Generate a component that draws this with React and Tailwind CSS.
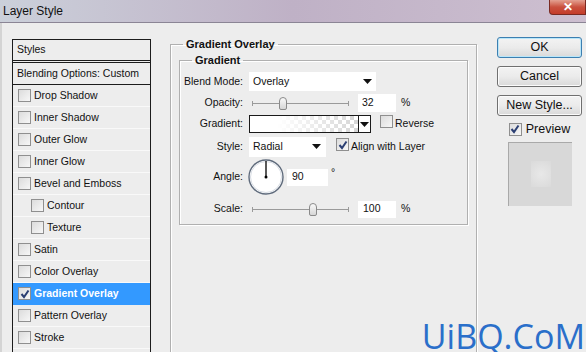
import React from "react";

const font = { fontFamily: '"Liberation Sans", Arial, sans-serif' };

function Check({ checked }) {
  return (
    <span className="inline-flex h-[13px] w-[13px] shrink-0 items-center justify-center border border-[#8f8f8f] bg-gradient-to-br from-[#dcdcdc] to-[#f7f7f7]">
      {checked && (
        <svg width="10" height="10" viewBox="0 0 10 10">
          <path d="M1.5 5 L4 8 L8.5 1.5" fill="none" stroke="#2b3f73" strokeWidth="2" />
        </svg>
      )}
    </span>
  );
}

function Arrow() {
  return (
    <svg width="9" height="5" viewBox="0 0 9 5">
      <path d="M0 0 H9 L4.5 5 Z" fill="#111" />
    </svg>
  );
}

function Slider({ pos }) {
  return (
    <div className="relative h-[18px] w-[100px]">
      <div className="absolute left-[3px] right-0 top-[9px] h-px bg-[#9a9a9a]" />
      <div className="absolute left-[3px] top-[7px] h-[5px] w-px bg-[#9a9a9a]" />
      <div className="absolute right-0 top-[7px] h-[5px] w-px bg-[#9a9a9a]" />
      <div
        className="absolute top-[3px] h-[13px] w-[8px] rounded-t-[4px] rounded-b-[2px] border border-[#8a8a8a] bg-gradient-to-b from-[#fafafa] to-[#d6d6d6]"
        style={{ left: pos }}
      />
    </div>
  );
}

const rows = [
  ["Drop Shadow", 0],
  ["Inner Shadow", 0],
  ["Outer Glow", 0],
  ["Inner Glow", 0],
  ["Bevel and Emboss", 0],
  ["Contour", 1],
  ["Texture", 1],
  ["Satin", 0],
  ["Color Overlay", 0],
  ["Gradient Overlay", 0, true],
  ["Pattern Overlay", 0],
  ["Stroke", 0],
];

function Button({ children, primary }) {
  return (
    <div
      className={
        "flex h-[21px] w-[85px] items-center justify-center rounded-[3px] border bg-gradient-to-b from-[#f3f3f3] via-[#ebebeb] to-[#d9d9d9] text-[12.5px] text-[#111] " +
        (primary ? "border-[#3c7fb1] shadow-[inset_0_0_0_1px_#b9e6f9]" : "border-[#707070] shadow-[inset_0_0_0_1px_#fbfbfb]")
      }
    >
      {children}
    </div>
  );
}

export default function App() {
  return (
    <div className="relative h-[352px] w-[586px] overflow-hidden bg-[#ededed] text-[#111]" style={font}>
      <div className="relative flex h-[23px] items-center border-b border-[#8b8595] bg-gradient-to-r from-[#cbd0da] via-[#bfb1c6] to-[#cdbfd0] pl-[3px] text-[12px] text-[#111]">
        Layer Style
        <div className="absolute right-0 top-0 flex h-[15px] w-[37px] items-center justify-center rounded-bl-[4px] border border-t-0 border-[#7a2a22] bg-gradient-to-b from-[#e3a091] via-[#c9503e] to-[#c43c2a] text-[12px] font-bold leading-none text-white">
          ✕
        </div>
      </div>

      <div className="flex border-l-[2px] border-[#d4d4d4] pl-[10px] pt-[15px]">
        <div className="mt-[1px] w-[139px] shrink-0 border border-[#1c1c1c] text-[10.5px]">
          <div className="flex h-[23px] items-center border-b-[3px] border-double border-[#1c1c1c] pl-[4px]">Styles</div>
          <div className="flex h-[22px] items-center border-b border-[#1c1c1c] pl-[4px]">Blending Options: Custom</div>
          {rows.map(([label, indent, sel]) => (
            <div
              key={label}
              className={
                "flex h-[22px] items-center gap-[3px] border-b " +
                (sel ? "border-[#3399ff] bg-[#3399ff] font-bold text-white" : "border-[#f9f9f9]") +
                (indent ? " pl-[18px]" : " pl-[5px]")
              }
            >
              <Check checked={sel} />
              <span>{label}</span>
            </div>
          ))}
        </div>

        <div className="ml-[19px] shrink-0">
          <fieldset className="h-[330px] w-[307px] border border-[#b0b0b0] px-[8px] shadow-[inset_1px_1px_0_#fff,1px_1px_0_#fff]">
            <legend className="ml-[4px] px-[3px] text-[11px] font-bold leading-[13px]">Gradient Overlay</legend>
            <fieldset className="mt-[3px] h-[171px] border border-[#b0b0b0] shadow-[inset_1px_1px_0_#fff,1px_1px_0_#fff]">
              <legend className="ml-[12px] px-[3px] text-[11px] font-bold leading-[13px]">Gradient</legend>
              <div className="grid grid-cols-[63px_1fr] gap-x-[6px] pt-[4px] text-[10.5px]">
                <div className="flex h-[21px] items-center justify-end">Blend Mode:</div>
                <div className="flex h-[21px] items-center">
                  <div className="flex h-[19px] w-[127px] items-center justify-between bg-white pl-[4px] pr-[4px]">
                    <span>Overlay</span>
                    <Arrow />
                  </div>
                </div>

                <div className="flex h-[21px] items-center justify-end">Opacity:</div>
                <div className="flex h-[21px] items-center">
                  <Slider pos={30} />
                  <div className="ml-[9px] flex h-[18px] w-[38px] items-center bg-white pl-[4px]">32</div>
                  <span className="ml-[5px]">%</span>
                </div>

                <div className="flex h-[22px] items-center justify-end">Gradient:</div>
                <div className="flex h-[22px] items-center">
                  <div className="flex h-[18px] w-[122px] border border-[#1a1a1a]">
                    <div className="h-full w-[108px] bg-[linear-gradient(to_right,#fff_25%,rgba(255,255,255,0)),repeating-conic-gradient(#d6d6d6_0_25%,#fff_0_50%)] bg-[length:100%_100%,8px_8px]" />
                    <div className="flex h-full flex-1 items-center justify-center border-l border-[#1a1a1a] bg-white">
                      <Arrow />
                    </div>
                  </div>
                  <span className="ml-[9px]">
                    <Check />
                  </span>
                  <span className="ml-[2px]">Reverse</span>
                </div>

                <div className="flex h-[23px] items-center justify-end">Style:</div>
                <div className="flex h-[23px] items-center">
                  <div className="flex h-[20px] w-[77px] items-center justify-between bg-white pl-[4px] pr-[5px]">
                    <span>Radial</span>
                    <Arrow />
                  </div>
                  <span className="ml-[10px]">
                    <Check checked />
                  </span>
                  <span className="ml-[2px]">Align with Layer</span>
                </div>

                <div className="flex h-[38px] items-center justify-end">Angle:</div>
                <div className="flex h-[38px] items-center">
                  <svg width="38" height="38" viewBox="0 0 38 38" className="-ml-[2px]">
                    <circle cx="19" cy="19" r="17" fill="#fff" stroke="#5f6b7c" strokeWidth="1.4" />
                    <circle cx="19" cy="19" r="15.5" fill="none" stroke="#d8dde4" strokeWidth="1" />
                    <line x1="19" y1="19" x2="19" y2="3" stroke="#000" strokeWidth="1.3" />
                    <circle cx="19" cy="19" r="1.5" fill="#000" />
                  </svg>
                  <div className="ml-[2px] flex h-[17px] w-[41px] items-center bg-white pl-[5px]">90</div>
                  <span className="-mt-[8px] ml-[3px]">°</span>
                </div>

                <div className="flex h-[26px] items-center justify-end">Scale:</div>
                <div className="flex h-[26px] items-center">
                  <Slider pos={60} />
                  <div className="ml-[9px] flex h-[17px] w-[38px] items-center bg-white pl-[5px]">100</div>
                  <span className="ml-[5px]">%</span>
                </div>
              </div>
            </fieldset>
          </fieldset>
        </div>

        <div className="ml-[20px] flex shrink-0 flex-col items-center">
          <div className="mt-[-1px] flex flex-col gap-[8px]">
            <Button primary>OK</Button>
            <Button>Cancel</Button>
            <Button>New Style...</Button>
          </div>
          <div className="mt-[4px] flex items-center gap-[4px] text-[12.5px]">
            <Check checked />
            <span>Preview</span>
          </div>
          <div className="mt-[3px] flex h-[64px] w-[64px] items-center justify-center border-l border-t border-[#a9a9a9] bg-[#d8d8d8]">
            <div className="ml-[2px] h-[26px] w-[20px] bg-[radial-gradient(circle,#e8e8e8,#dadada)]" />
          </div>
        </div>
      </div>

      <div
        className="absolute bottom-[-1px] right-[1px] text-[34px] leading-none text-[#2a6fca]"
        style={{ fontFamily: '"Open Sans", "Noto Sans", sans-serif' }}
      >
        UiBQ.CoM
      </div>
    </div>
  );
}
